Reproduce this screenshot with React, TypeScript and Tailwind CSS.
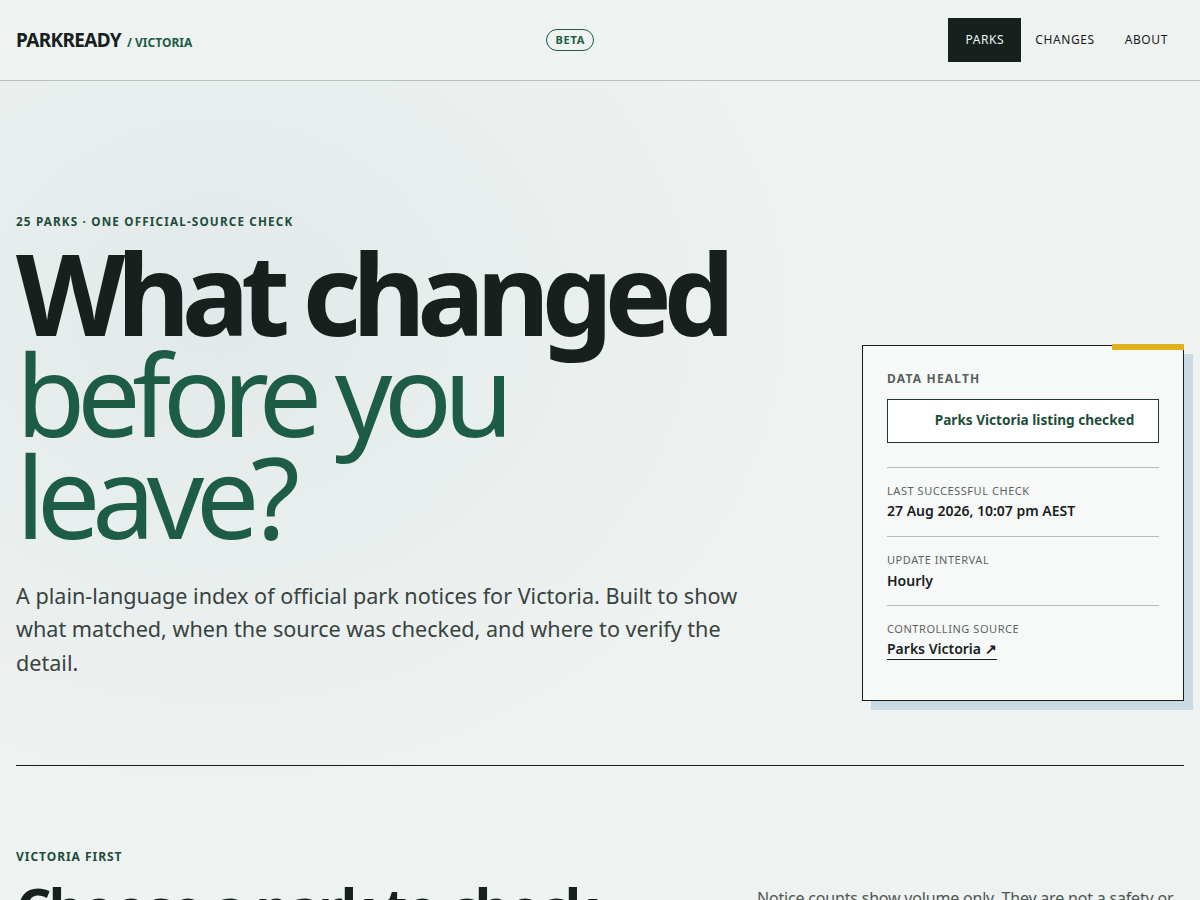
import React from 'react';

const font = { fontFamily: '"Noto Sans", "Open Sans", sans-serif' };

export default function App() {
  return (
    <div
      style={font}
      className="min-h-screen bg-[#eef2f1] text-[#17201d] bg-[radial-gradient(ellipse_at_18%_28%,#e3e9ea_0%,#eef2f1_42%)]"
    >
      {/* Header */}
      <header className="h-[81px] px-4 flex items-center justify-between border-b border-[#b9c0be] bg-[#eef2f1]">
        <a className="flex items-baseline gap-1.5">
          <span className="text-[19px] font-bold tracking-[-0.035em] text-[#17201d]">PARKREADY</span>
          <span className="text-[12px] font-bold text-[#1d5c45]">/ VICTORIA</span>
        </a>
        <span className="px-2 py-[2px] rounded-full border border-[#1d5c45] text-[11px] font-bold tracking-[0.07em] text-[#1d5c45]">
          BETA
        </span>
        <nav className="flex items-center">
          <a className="h-11 px-[17px] flex items-center bg-[#17201d] text-[#eef2f1] text-[12px] tracking-[0.05em]">PARKS</a>
          <a className="h-11 px-[14px] flex items-center text-[12px] tracking-[0.05em] text-[#17201d]">CHANGES</a>
          <a className="h-11 px-4 flex items-center text-[12px] tracking-[0.05em] text-[#17201d]">ABOUT</a>
        </nav>
      </header>

      {/* Hero */}
      <section className="mx-4 pt-[132px] pb-[86px] border-b border-[#17201d]">
        <div className="grid grid-cols-[1fr_322px] gap-10 items-end">
          <div>
            <p className="text-[11.7px] font-bold tracking-[0.1em] text-[#1d4d3a]">
              25 PARKS · ONE OFFICIAL-SOURCE CHECK
            </p>
            <h1 className="mt-[11px] text-[113px] leading-[0.9] tracking-[-0.075em]">
              <span className="block font-bold text-[#17201d]">What changed</span>
              <span className="block font-normal text-[#1d5c45]">before you</span>
              <span className="block font-normal text-[#1d5c45]">leave?</span>
            </h1>
            <p className="mt-[32px] max-w-[740px] text-[21.6px] leading-[1.55] text-[#38433f]">
              A plain-language index of official park notices for Victoria. Built to show what matched, when the source was checked, and where to verify the detail.
            </p>
          </div>

          <aside className="relative mb-[-22px] shadow-[9px_9px_0_0_#c9d9e1]">
            <div className="absolute -top-px right-0 w-[72px] h-[6px] bg-[#e0b21c]" />
            <div className="border border-[#17201d] bg-[#f7f9f8] px-6 pt-[24px] pb-[41px]">
              <p className="text-[12px] font-bold tracking-[0.1em] text-[#56605c]">DATA HEALTH</p>
              <div className="mt-[11px] h-11 flex items-center justify-center gap-2 border border-[#1f3b31] bg-white">
                <span className="w-[15px]" />
                <span className="text-[13.6px] font-bold text-[#1d4d3a]">Parks Victoria listing checked</span>
              </div>
              <dl className="mt-6">
                <div className="border-t border-[#b9bebc] pt-[15px] pb-[15px]">
                  <dt className="text-[11px] tracking-[0.05em] text-[#5b6461]">LAST SUCCESSFUL CHECK</dt>
                  <dd className="mt-[1px] text-[14px] font-semibold text-[#17201d]">27 Aug 2026, 10:07 pm AEST</dd>
                </div>
                <div className="border-t border-[#b9bebc] pt-[15px] pb-[14px]">
                  <dt className="text-[11px] tracking-[0.05em] text-[#5b6461]">UPDATE INTERVAL</dt>
                  <dd className="mt-[1px] text-[14px] font-semibold text-[#17201d]">Hourly</dd>
                </div>
                <div className="border-t border-[#b9bebc] pt-[15px]">
                  <dt className="text-[11px] tracking-[0.05em] text-[#5b6461]">CONTROLLING SOURCE</dt>
                  <dd className="mt-[1px] text-[14px] font-semibold text-[#17201d]">
                    <a className="border-b border-[#17201d] pb-[1px]">Parks Victoria ↗</a>
                  </dd>
                </div>
              </dl>
            </div>
          </aside>
        </div>
      </section>

      {/* Parks section */}
      <section className="px-4 pt-[82px]">
        <p className="text-[12px] font-bold tracking-[0.08em] text-[#1d4d3a]">VICTORIA FIRST</p>
        <div className="mt-[14px] grid grid-cols-[1fr_427px] gap-10 items-start">
          <h2 className="text-[55px] leading-[1] font-bold tracking-[-0.045em] text-[#17201d]">Choose a park to check</h2>
          <p className="pt-[6px] text-[16px] leading-[1.5] tracking-[-0.012em] text-[#4d5753]">
            Notice counts show volume only. They are not a safety or risk rating. Always confirm conditions with the official source before you go.
          </p>
        </div>
        <div className="h-40" />
      </section>
    </div>
  );
}
